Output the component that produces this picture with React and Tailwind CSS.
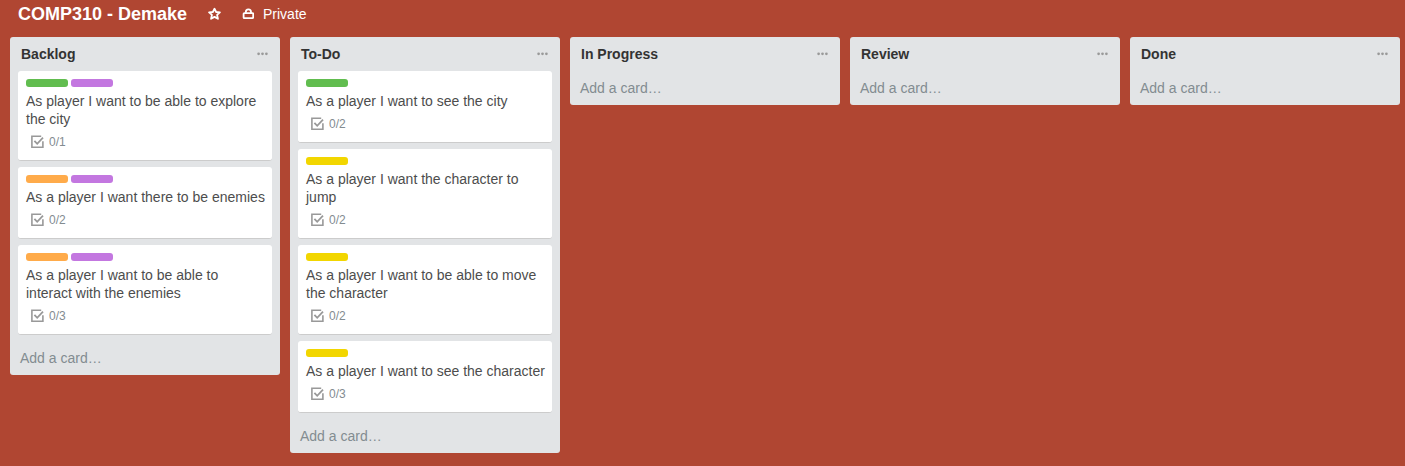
import React from "react";

const labelColors = {
  green: "bg-[#61bd4f]",
  purple: "bg-[#c377e0]",
  orange: "bg-[#ffab4a]",
  yellow: "bg-[#f2d600]",
};

const lists = [
  {
    name: "Backlog",
    cards: [
      { labels: ["green", "purple"], title: "As player I want to be able to explore the city", checks: "0/1" },
      { labels: ["orange", "purple"], title: "As a player I want there to be enemies", checks: "0/2" },
      { labels: ["orange", "purple"], title: "As a player I want to be able to interact with the enemies", checks: "0/3" },
    ],
  },
  {
    name: "To-Do",
    cards: [
      { labels: ["green"], title: "As a player I want to see the city", checks: "0/2" },
      { labels: ["yellow"], title: "As a player I want the character to jump", checks: "0/2" },
      { labels: ["yellow"], title: "As a player I want to be able to move the character", checks: "0/2" },
      { labels: ["yellow"], title: "As a player I want to see the character", checks: "0/3" },
    ],
  },
  { name: "In Progress", cards: [] },
  { name: "Review", cards: [] },
  { name: "Done", cards: [] },
];

function StarIcon() {
  return (
    <svg width="14" height="14" viewBox="0 0 14 14" fill="none" stroke="currentColor" strokeWidth="1.8" strokeLinejoin="round">
      <path d="M6.5 1.7 8.1 5 11.9 5.4 9.1 7.9 9.9 11.8 6.5 9.9 3.1 11.8 3.9 7.9 1.1 5.4 4.9 5Z" />
    </svg>
  );
}

function LockIcon() {
  return (
    <svg width="12" height="12" viewBox="0 0 12 12" fill="none" stroke="currentColor" strokeWidth="1.8">
      <rect x="1.6" y="5.1" width="9.6" height="5" rx="0.7" />
      <path d="M3.8 5.1V3.9a2.6 2.6 0 0 1 5.2 0V5.1" />
    </svg>
  );
}

function ChecklistIcon() {
  return (
    <svg width="13" height="14" viewBox="0 0 13 14" fill="none" stroke="currentColor" strokeWidth="1.6">
      <path d="M10.2 1.3H0.9V12.2H11.9V6.2" />
      <path d="M3.4 5.9 6.2 8.8 12 2.6" strokeWidth="1.8" />
    </svg>
  );
}

function DotsIcon() {
  return (
    <svg width="11" height="4" viewBox="0 0 11 4" fill="currentColor">
      <circle cx="1.6" cy="1.8" r="1.35" />
      <circle cx="5.5" cy="1.8" r="1.35" />
      <circle cx="9.4" cy="1.8" r="1.35" />
    </svg>
  );
}

function Card({ labels, title, checks }) {
  return (
    <article className="mb-1.5 rounded-[3px] border-b border-[#ccc] bg-white pt-2 pr-1.5 pb-2 pl-2">
      <div className="mb-[5px] flex gap-[3px]">
        {labels.map((label) => (
          <span key={label} className={`h-2 w-[42px] rounded-[3px] ${labelColors[label]}`} />
        ))}
      </div>
      <p className="text-sm leading-[18px] text-[#4d4d4d]">{title}</p>
      <div className="mt-1 flex h-[20px] items-center gap-[5px] pl-[5px]">
        <span className="text-[#999]">
          <ChecklistIcon />
        </span>
        <span className="text-xs leading-[18px] text-[#838c91]">{checks}</span>
      </div>
    </article>
  );
}

function List({ name, cards }) {
  return (
    <section className="w-[270px] shrink-0 rounded-[3px] bg-[#e2e4e6] px-2">
      <header className="flex h-[34px] items-center justify-between pr-1 pl-[3px]">
        <h2 className="text-sm leading-[18px] font-bold text-[#333]">{name}</h2>
        <span className="text-[#999]">
          <DotsIcon />
        </span>
      </header>
      {cards.map((card) => (
        <Card key={card.title} {...card} />
      ))}
      <div className="flex h-[34px] items-center pl-0.5 text-sm leading-[18px] text-[#838c91]">Add a card…</div>
    </section>
  );
}

export default function App() {
  return (
    <div className="h-[466px] overflow-hidden bg-[#b04632] font-['Liberation_Sans',Arial,sans-serif]">
      <header className="flex h-[37px] items-start pt-1 pl-[18px] text-white">
        <h1 className="w-[190px] text-lg leading-5 font-bold whitespace-nowrap">COMP310 - Demake</h1>
        <span className="flex h-5 w-[34px] items-center">
          <StarIcon />
        </span>
        <span className="flex h-5 items-center gap-[9px] text-sm">
          <LockIcon />
          Private
        </span>
      </header>
      <main className="flex items-start gap-2.5 pl-2.5">
        {lists.map((list) => (
          <List key={list.name} {...list} />
        ))}
      </main>
    </div>
  );
}
